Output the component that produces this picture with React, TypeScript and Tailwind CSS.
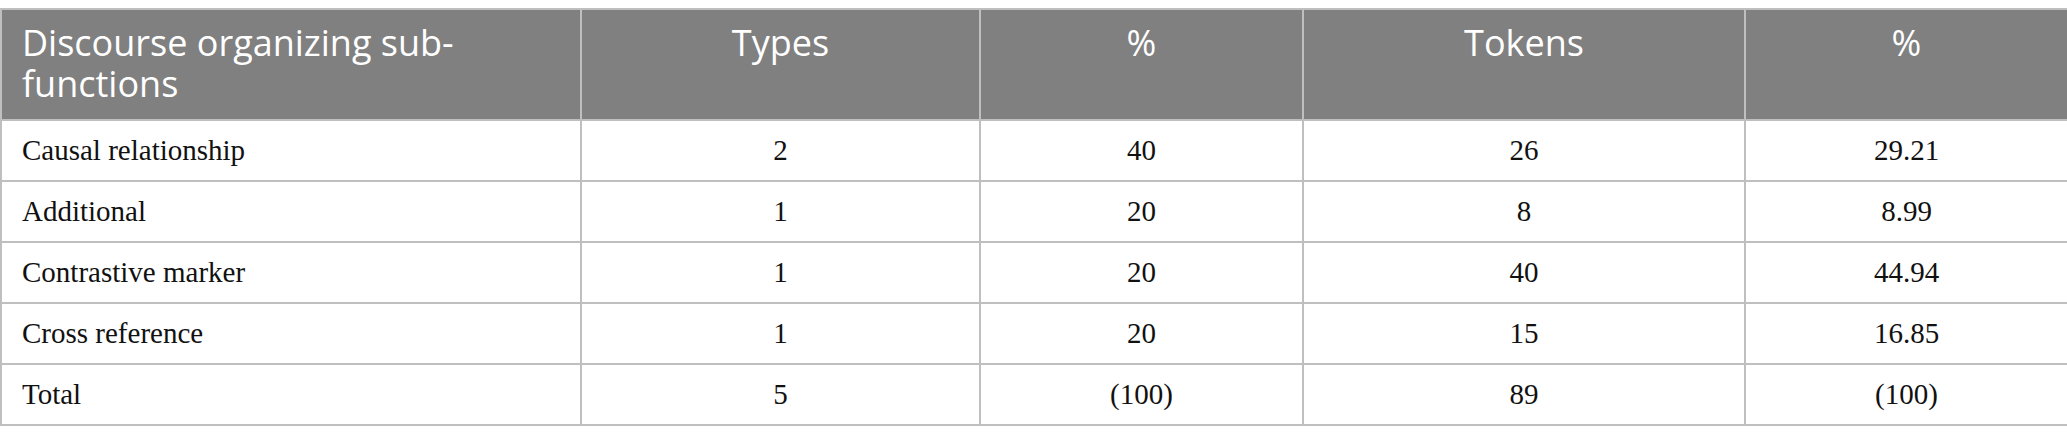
const rows = [
  ["Causal relationship", "2", "40", "26", "29.21"],
  ["Additional", "1", "20", "8", "8.99"],
  ["Contrastive marker", "1", "20", "40", "44.94"],
  ["Cross reference", "1", "20", "15", "16.85"],
  ["Total", "5", "(100)", "89", "(100)"],
];

const widths = ["w-[580px]", "w-[399px]", "w-[323px]", "w-[442px]", "w-[323px]"];

export default function App() {
  return (
    <div className="min-h-screen bg-white pt-2">
      <table className="w-[2066px] table-fixed border-collapse">
        <colgroup>
          {widths.map((w, i) => (
            <col key={i} className={w} />
          ))}
        </colgroup>
        <thead>
          <tr className="h-[111px] bg-[#808080] font-['Open_Sans',sans-serif] text-[36px] leading-[41px] font-normal text-white">
            <th className="border-2 border-[#bfbfbf] px-[20px] pt-[12px] align-top text-left font-normal">
              Discourse organizing sub-functions
            </th>
            <th className="border-2 border-[#bfbfbf] px-[20px] pt-[12px] align-top text-center font-normal">Types</th>
            <th className="border-2 border-[#bfbfbf] px-[20px] pt-[12px] align-top text-center font-normal">%</th>
            <th className="border-2 border-[#bfbfbf] px-[20px] pt-[12px] align-top text-center font-normal">Tokens</th>
            <th className="border-2 border-[#bfbfbf] px-[20px] pt-[12px] align-top text-center font-normal">%</th>
          </tr>
        </thead>
        <tbody className="font-['Liberation_Serif',serif] text-[29px] text-[#111]">
          {rows.map((r) => (
            <tr key={r[0]} className="h-[61px]">
              {r.map((c, i) => (
                <td
                  key={i}
                  className={`border-2 border-[#bfbfbf] px-[20px] align-middle ${i === 0 ? "text-left" : "text-center"}`}
                >
                  {c}
                </td>
              ))}
            </tr>
          ))}
        </tbody>
      </table>
    </div>
  );
}
